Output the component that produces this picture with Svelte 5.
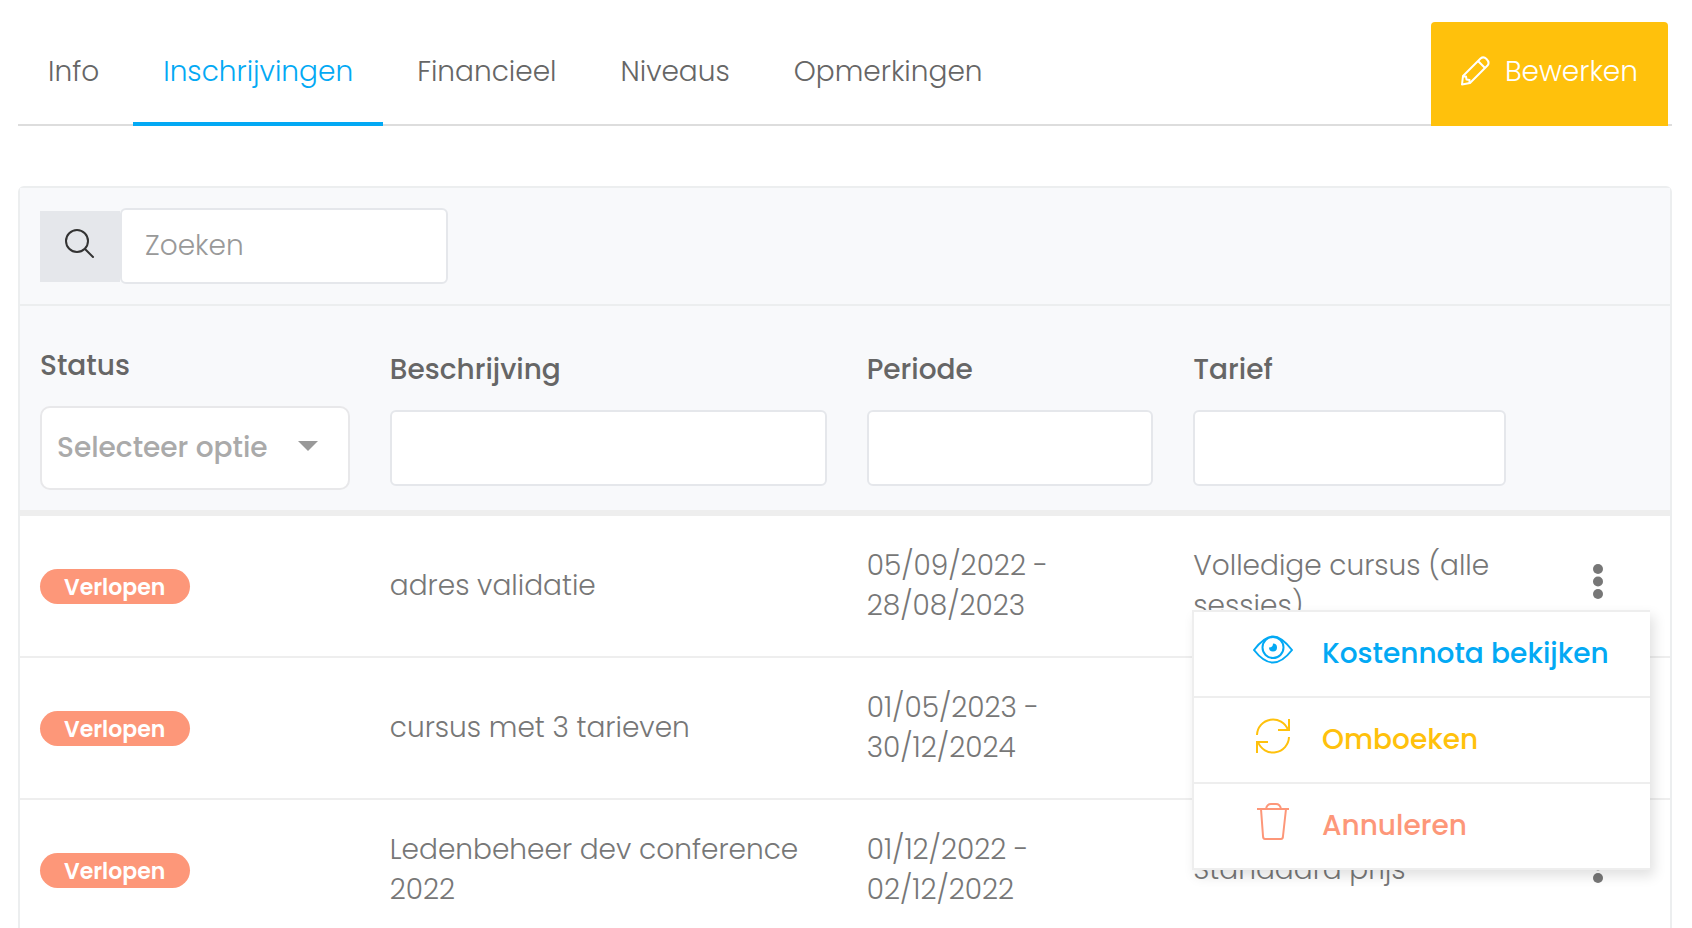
<script>
  const tabs = ['Info', 'Inschrijvingen', 'Financieel', 'Niveaus', 'Opmerkingen'];
  let active = $state('Inschrijvingen');
  let search = $state('');
  let openRow = $state(0);

  const rows = [
    { status: 'Verlopen', name: 'adres validatie', period: '05/09/2022 - 28/08/2023', rate: 'Volledige cursus (alle sessies)' },
    { status: 'Verlopen', name: 'cursus met 3 tarieven', period: '01/05/2023 - 30/12/2024', rate: '' },
    { status: 'Verlopen', name: 'Ledenbeheer dev conference 2022', period: '01/12/2022 - 02/12/2022', rate: 'Standaard prijs' }
  ];
</script>

<main>
  <nav class="tabs">
    {#each tabs as tab}
      <button type="button" class="tab" class:active={tab === active} onclick={() => (active = tab)}>{tab}</button>
    {/each}
    <button type="button" class="edit">
      <svg width="30" height="30" viewBox="0 0 30 30" fill="none" stroke="currentColor" stroke-width="2" stroke-linejoin="round" aria-hidden="true">
        <path d="M3 20 L20.500 2.500 Q23.500 0 26.500 3 Q30 6.500 27.500 9.500 L10 27 L2 28.500 Z" />
        <path d="M18 5 L25 12 M3 20.500 L6 20.500 L6.500 23.500 L9.500 24 L9.500 27" />
      </svg>
      Bewerken
    </button>
  </nav>

  <section class="card">
    <div class="toolbar">
      <label class="lens" for="search" aria-label="Zoeken">
        <svg width="30" height="30" viewBox="0 0 30 30" fill="none" stroke="currentColor" stroke-width="2" stroke-linecap="round" aria-hidden="true">
          <circle cx="12" cy="12" r="11" />
          <path d="M20 20 L28 28" />
        </svg>
      </label>
      <input id="search" class="field" type="text" placeholder="Zoeken" bind:value={search} />
    </div>

    <table>
      <colgroup>
        <col class="c-status" /><col class="c-name" /><col class="c-period" /><col class="c-rate" /><col />
      </colgroup>
      <thead>
        <tr>
          <th>
            <label for="f-status">Status</label>
            <div class="select">
              <select id="f-status">
                <option>Selecteer optie</option>
                <option>Verlopen</option>
              </select>
              <svg width="20" height="10" viewBox="0 0 20 10" aria-hidden="true"><path d="M0 0 H20 L10 10 Z" fill="currentColor" /></svg>
            </div>
          </th>
          <th><label for="f-name">Beschrijving</label><input id="f-name" class="field" type="text" /></th>
          <th><label for="f-period">Periode</label><input id="f-period" class="field" type="text" /></th>
          <th><label for="f-rate">Tarief</label><input id="f-rate" class="field" type="text" /></th>
          <th></th>
        </tr>
      </thead>
      <tbody>
        {#each rows as row, i}
          <tr>
            <td><span class="badge">{row.status}</span></td>
            <td>{row.name}</td>
            <td>{row.period}</td>
            <td>{row.rate}</td>
            <td class="actions">
              <button type="button" class="dots" aria-label="Acties" onclick={() => (openRow = openRow === i ? -1 : i)}>
                <svg width="10" height="35" viewBox="0 0 10 35" fill="currentColor" aria-hidden="true">
                  <circle cx="5" cy="5" r="5" /><circle cx="5" cy="17.500" r="5" /><circle cx="5" cy="30" r="5" />
                </svg>
              </button>
              {#if openRow === i}
                <div class="menu">
                  <button type="button" class="view">
                    <svg width="40" height="40" viewBox="0 0 40 40" fill="none" stroke="currentColor" stroke-width="2" stroke-linejoin="round" aria-hidden="true">
                      <path d="M1 21 C8 12 14 7.500 20 7.500 C26 7.500 32 12 39 21 C32 30 26 33.500 20 33.500 C14 33.500 8 30 1 21 Z" />
                      <circle cx="20" cy="18.500" r="10.500" />
                      <path d="M20 14.500 A4 4 0 1 1 16 18.500 A4 4 0 0 0 20 14.500 Z" fill="currentColor" stroke="none" />
                    </svg>
                    Kostennota bekijken
                  </button>
                  <button type="button" class="rebook">
                    <svg width="40" height="40" viewBox="0 0 40 40" fill="none" stroke="currentColor" stroke-width="2" aria-hidden="true">
                      <path d="M4 20 A16 16 0 0 1 35 15 M36 4 V15 H25 M36 22 A16 16 0 0 1 5 27 M4 38 V27 H15" />
                    </svg>
                    Omboeken
                  </button>
                  <button type="button" class="cancel">
                    <svg width="40" height="40" viewBox="0 0 40 40" fill="none" stroke="currentColor" stroke-width="2" stroke-linejoin="round" aria-hidden="true">
                      <path d="M4 8 H36 M8 8 L10 35 Q10 38 12 38 H28 Q30 38 30 35 L33 8 M13 8 Q14 3 18 3 H23 Q27 3 28 8" />
                    </svg>
                    Annuleren
                  </button>
                </div>
              {/if}
            </td>
          </tr>
        {/each}
      </tbody>
    </table>
  </section>
</main>

<style>
  :global(body) {
    margin: 0;
    background: #fff;
  }
  main {
    padding: 22px 20px 0 18px;
    font: 300 28px/40px Poppins, Inter, sans-serif;
    color: #777;
  }
  button,
  input,
  select {
    margin: 0;
    font: inherit;
    color: inherit;
    box-sizing: border-box;
  }
  button {
    padding: 0;
    border: 0;
    background: none;
    cursor: pointer;
  }
  svg {
    display: block;
    flex: none;
  }
  .tabs {
    display: flex;
    gap: 4px;
    border-bottom: 2px solid #ddd;
    color: #666;
  }
  .tab {
    padding: 30px;
    border-bottom: 4px solid transparent;
    margin-bottom: -2px;
  }
  .tab.active {
    color: #03a9f4;
    border-color: #03a9f4;
  }
  .edit {
    display: flex;
    align-items: center;
    gap: 15px;
    margin: 0 4px -2px auto;
    padding: 0 30px 4px 29px;
    border-radius: 4px 4px 0 0;
    background: #ffc10c;
    color: #fff;
  }
  .edit svg {
    margin-bottom: 2px;
  }
  .card {
    margin-top: 60px;
    border: 2px solid #eceeef;
    border-radius: 6px;
  }
  .toolbar {
    display: flex;
    align-items: center;
    padding: 20px;
    border-bottom: 2px solid #eceeef;
    background: #f8f9fb;
  }
  .lens {
    display: grid;
    place-items: center;
    width: 80px;
    height: 71px;
    padding-bottom: 4px;
    box-sizing: border-box;
    background: #e5e7eb;
    color: #333;
  }
  .field {
    display: block;
    width: 100%;
    height: 76px;
    padding: 0 23px;
    border: 2px solid #e5e7eb;
    border-radius: 6px;
    background: #fff;
  }
  .toolbar .field {
    width: 328px;
  }
  .field::placeholder {
    color: #999;
    opacity: 1;
  }
  table {
    width: 100%;
    table-layout: fixed;
    border-collapse: separate;
    border-spacing: 0;
  }
  .c-status {
    width: 21.2%;
  }
  .c-name {
    width: 28.9%;
  }
  .c-period {
    width: 19.8%;
  }
  .c-rate {
    width: 21.4%;
  }
  th {
    padding: 20px;
    border-bottom: 6px solid #eee;
    background: #f8f9fb;
    color: #666;
    text-align: left;
    font-weight: 500;
    vertical-align: middle;
  }
  th label {
    display: block;
    line-height: 80px;
  }
  .select {
    display: grid;
    align-items: center;
    color: #999;
  }
  .select > * {
    grid-area: 1 / 1;
  }
  select {
    appearance: none;
    width: 100%;
    height: 84px;
    padding: 0 60px 0 15px;
    border: 2px solid #e8e8ea;
    border-radius: 10px;
    background: #fff;
    color: #aaa;
  }
  .select svg {
    justify-self: end;
    margin: 0 32px 4px 0;
    pointer-events: none;
  }
  td {
    padding: 30px 20px;
    border-bottom: 2px solid #eee;
    vertical-align: middle;
  }
  .badge {
    display: block;
    width: fit-content;
    padding: 2px 25px 0 24px;
    border-radius: 18px;
    background: #fd9779;
    color: #fff;
    font-size: 22px;
    line-height: 33px;
    font-weight: 600;
  }
  .actions {
    position: relative;
  }
  .dots {
    display: block;
    margin: 0 auto;
    padding: 0 10px 9px;
  }
  .menu {
    position: absolute;
    z-index: 2;
    top: 94px;
    right: 20px;
    width: 458px;
    box-sizing: border-box;
    border: solid #eee;
    border-width: 2px 0 0 2px;
    background: #fff;
    box-shadow: 4px 6px 12px rgba(0, 0, 0, 0.12);
  }
  .menu button {
    display: flex;
    align-items: center;
    gap: 29px;
    width: 100%;
    height: 86px;
    padding-left: 59px;
    border-bottom: 2px solid #eee;
    font-weight: 500;
    white-space: nowrap;
  }
  .menu svg {
    margin-bottom: 10px;
  }
  .view {
    color: #03a9f4;
  }
  .rebook {
    color: #ffc10c;
  }
  .cancel {
    color: #fd9779;
  }
</style>
